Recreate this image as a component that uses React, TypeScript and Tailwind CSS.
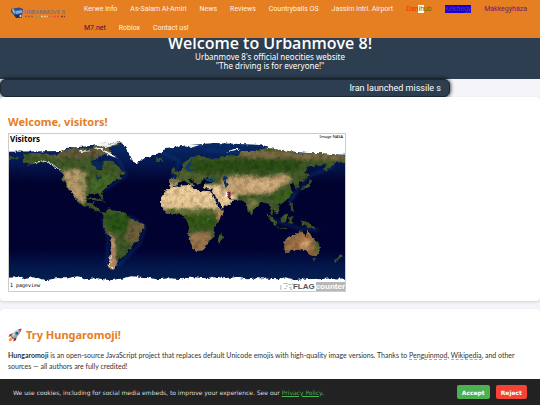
import { useState } from "react";
import type { ReactNode } from "react";

type NavItem = { label: ReactNode; key: string; className?: string };

const navItems: NavItem[] = [
  { key: "kerwe", label: "Kerwe Info" },
  { key: "salam", label: "As-Salam Al-Amiri" },
  { key: "news", label: "News" },
  { key: "reviews", label: "Reviews" },
  { key: "countryballs", label: "Countryballs OS" },
  { key: "jassim", label: "Jassim Intrl. Airport" },
  {
    key: "danihub",
    label: (
      <>
        <span className="text-[#ff2a00]">Dan</span>
        <span className="bg-white text-[#436f4d]">ih</span>
        <span className="text-[#4f7a00]">ub</span>
      </>
    ),
  },
  { key: "kekhegy", label: "Kékhegy", className: "bg-[#1400d8] text-[#5a35a8]" },
  { key: "makk", label: "Makkegyháza", className: "text-[#6b1f6f]" },
  { key: "m7", label: "M7.net", className: "text-[#4b0a4a]" },
  { key: "roblox", label: "Roblox" },
  { key: "contact", label: "Contact us!" },
];

function Logo() {
  return (
    <svg viewBox="0 0 58 14" className="h-[14px] w-[58px] shrink-0" role="img" aria-label="Urbanmove 8">
      <path d="M1 3 L9 1.5 L13 3 L12 10 L5 10 L1 6Z" fill="#284f8e" />
      <path d="M1.5 3.5 L4 3 L5.5 8 L3.5 7Z" fill="#9fb4cc" />
      <path d="M5 5 L12 4 L12 7 L6 8Z" fill="#7da9dc" />
      <path d="M4 9 L11 9 L12 11.5 L6 12Z" fill="#23304c" />
      <circle cx="10.5" cy="10" r="1" fill="#e8eef5" />
      <text x="14" y="8" fontSize="6" fontFamily="Roboto, sans-serif" fill="#5f6a9c">URBANMOVE 8</text>
      <path d="M15 10.5H24" stroke="#a0602f" strokeWidth="1.5" strokeDasharray="2 1" />
      <path d="M25 10.5H31" stroke="#8f9a63" strokeWidth="1.5" strokeDasharray="2 1" />
      <path d="M31 10.5H38" stroke="#f5c99a" strokeWidth="1.5" strokeDasharray="2 1" />
      <path d="M38 10.5H44" stroke="#b5793f" strokeWidth="1.5" strokeDasharray="2 1" />
      <path d="M44 10.5H50" stroke="#f0483a" strokeWidth="1.5" strokeDasharray="2 1" />
      <path d="M51 10.5H55" stroke="#7a3b2c" strokeWidth="1.5" strokeDasharray="2 1" />
    </svg>
  );
}

function WorldMap() {
  return (
    <svg viewBox="8 133 338 158" className="block w-full" role="img" aria-label="Visitors map">
      <defs>
        <filter id="rough" x="-5%" y="-5%" width="110%" height="110%" colorInterpolationFilters="sRGB">
          <feTurbulence type="fractalNoise" baseFrequency="0.25" numOctaves="3" seed="4" result="n" />
          <feDisplacementMap in="SourceGraphic" in2="n" scale="4" xChannelSelector="R" yChannelSelector="G" />
        </filter>
        <filter id="soft" x="-30%" y="-30%" width="160%" height="160%" colorInterpolationFilters="sRGB">
          <feGaussianBlur stdDeviation="1.5" />
        </filter>
        <filter id="grain" x="0" y="0" width="100%" height="100%" colorInterpolationFilters="sRGB">
          <feTurbulence type="fractalNoise" baseFrequency="0.2" numOctaves="3" seed="9" result="n" />
          <feColorMatrix in="n" values="0 0 0 0 0  0 0 0 0 0  0 0 0 0 0  2 0 0 0 -0.8" />
        </filter>
        <linearGradient id="sea" gradientUnits="userSpaceOnUse" x1="0" y1="140" x2="0" y2="280">
          <stop offset="0" stopColor="#0a2c66" />
          <stop offset="0.15" stopColor="#051852" />
          <stop offset="0.3" stopColor="#02022f" />
          <stop offset="0.78" stopColor="#020232" />
          <stop offset="0.9" stopColor="#03164a" />
          <stop offset="1" stopColor="#052050" />
        </linearGradient>
        <clipPath id="land">
          <path d="M5 155L19 157L5 160Z M22 158L23 155L30 152L45 153L57 154L62 149L75 147L90 148L100 143L122 142L108 147L113 155L105 153L98 156L91 161L93 165L98 167L100 170L103 164L103 160L110 160L116 163L120 168L126 173L119 175L122 178L114 180L109 183L104 188L102 192L103 199L101 199L98 193L92 193L86 196L86 202L91 203L94 200L93 205L98 208L101 212L105 212L103 214L97 211L90 207L83 206L77 201L74 195L71 191L67 188L64 183L62 178L62 173L57 167L50 163L41 162L33 163L25 166L29 163L22 161Z" />
          <path d="M103 214L108 208L112 210L118 210L124 212L128 217L135 220L144 224L144 227L140 232L138 240L133 244L130 249L126 253L124 256L119 258L117 263L113 268L114 270L110 269L108 265L109 256L111 245L110 236L105 231L102 225L103 219Z" />
          <path d="M161 197L165 191L170 187L180 185L191 184L192 188L197 189L201 191L204 189L211 190L214 196L219 206L221 209L225 209L222 216L217 223L214 227L215 236L209 241L207 246L203 250L195 251L191 243L188 234L189 226L187 220L182 214L173 214L166 213L161 206Z" />
          <path d="M218 240L219 235L223 232L223 236L221 243L218 243Z" />
          <path d="M169 184L169 178L177 178L177 175L173 172L182 169L182 164L185 161L192 157L200 154L207 157L214 158L220 157L226 155L238 154L243 150L252 150L268 147L282 149L300 152L322 152L350 155L350 160L337 162L333 165L327 171L324 168L328 163L318 165L309 166L305 171L311 174L306 179L300 182L299 187L296 188L294 182L290 184L293 190L290 197L284 202L278 204L281 209L278 213L273 210L275 216L272 213L270 205L266 201L261 203L255 208L252 214L248 211L247 204L242 200L234 199L227 195L230 199L234 199L231 203L222 208L217 202L212 193L213 188L203 187L206 183L214 182L211 178L207 176L202 180L198 185L196 182L190 178L187 178L195 184L192 185L186 180L182 180L175 185L171 186Z M171 169L174 166L176 172L172 173Z M301 189L305 185L309 183L311 178L313 180L309 187L303 188Z" />
          <path d="M267 213L270 214L278 223L276 225L271 220Z M277 226L289 228L287 229L277 227Z M281 218L286 213L289 214L286 222L282 222Z M290 217L294 217L292 220L294 223L290 223Z M290 200L293 205L295 212L292 209Z M301 220L309 222L317 228L309 227L303 224Z M83 198L96 197L105 201L96 200Z M155 157L162 157L162 160L157 160Z" />
          <path d="M284 241L290 237L297 232L303 231L306 236L309 230L313 237L320 244L321 250L317 256L311 255L307 250L302 249L295 250L286 252Z M312 258L316 258L315 261Z M341 253L344 256L340 258L336 263L334 261L339 258Z" />
        </clipPath>
      </defs>

      <rect x="8" y="133" width="338" height="159" fill="#fff" />
      <path d="M0 151L60 150L66 147L90 145L122 141L130 148L145 157L162 151L166 147L190 144L215 142L260 144L275 149L320 153L356 154V280H0Z" fill="url(#sea)" filter="url(#rough)" />

      {/* shallow water */}
      <g fill="none" stroke="#0f4a8c" strokeWidth="2" opacity="0.5" filter="url(#soft)">
        <path d="M103 190L126 175L118 158" />
        <path d="M128 215L145 226L139 244L117 266" />
        <path d="M162 152L180 160L172 178L190 165" />
        <path d="M205 149L245 152L270 152" />
        <path d="M295 190L290 202L310 175L335 166" />
        <path d="M272 219L300 228L320 230" />
        <path d="M102 218L108 238L106 265" />
      </g>

      <g filter="url(#rough)">
        <g clipPath="url(#land)">
          <rect x="0" y="133" width="356" height="150" fill="#425a28" />
          <g filter="url(#soft)">
            <path d="M20 150L120 140L130 155L60 158Z" fill="#655d3a" />
            <path d="M61 170L78 168L86 180L84 203L70 198Z" fill="#b99b6c" />
            <path d="M78 168L86 172L84 190L78 188Z" fill="#9c925e" />
            <path d="M90 178L115 172L105 192L92 192Z" fill="#456b26" />
            <path d="M104 212L130 216L128 232L108 230Z" fill="#2a5516" />
            <path d="M130 218L148 222L138 246L124 238Z" fill="#6e613a" />
            <path d="M108 231L114 236L117 266L108 271Z" fill="#be916c" />
            <path d="M158 184L236 184L236 208L218 208L158 208Z" fill="#efcf9b" />
            <path d="M182 212L215 212L214 226L188 228Z" fill="#355a16" />
            <path d="M160 209L220 209L216 214L160 215Z" fill="#667133" />
            <path d="M188 233L212 231L207 252L192 252Z" fill="#9c7850" />
            <path d="M216 210L228 207L218 222Z" fill="#bd9365" />
            <path d="M168 179L180 179L180 184L168 184Z" fill="#98855a" />
            <path d="M180 170L205 170L205 182L180 180Z" fill="#52652e" />
            <path d="M190 160L300 158L300 169L190 172Z" fill="#2d4f15" />
            <path d="M240 148L346 153L346 160L240 157Z" fill="#7a6c45" />
            <path d="M222 176L250 175L262 177L288 173L292 180L270 193L232 194L220 188Z" fill="#c6a474" />
            <path d="M246 182L278 182L266 190L250 188Z" fill="#e0bb8a" />
            <path d="M246 198L260 200L252 213Z" fill="#808046" />
            <path d="M277 190L294 188L290 203L276 203Z" fill="#3e6021" />
            <path d="M283 230L313 230L322 256L283 254Z" fill="#a27348" />
            <path d="M302 240L310 240L310 249L301 248Z" fill="#dca675" />
            <path d="M313 238L323 246L318 258Z" fill="#657038" />
          </g>
          <rect x="8" y="133" width="338" height="150" fill="#000" filter="url(#grain)" opacity="0.3" />
        </g>

        {/* inland seas */}
        <path d="M204 178L213 177L215 180L206 181Z" fill="#0c4375" />
        <path d="M223 176L227 175L226 179L229 184L226 186L224 182Z" fill="#06306a" />
        <path d="M92 160L100 160L103 166L98 170L93 165Z" fill="#082658" />
        <path d="M186 167L190 161L193 158L191 165L188 169L195 169L189 171Z" fill="#0d3a6d" />
        <path d="M94 174L99 175L102 179L98 178Z" fill="#0d2f5f" />
        <path d="M212 191L219 204L221 208" fill="none" stroke="#03103c" strokeWidth="2" />
        <path d="M207 218L210 218L209 222Z" fill="#287779" />

        {/* ice */}
        <path d="M120 140L130 139L168 138L166 143L159 147L158 152L149 155L141 159L137 163L133 161L129 153L126 148Z" fill="#fff" />
        <path d="M80 149L92 150L80 151Z M95 143L121 142L105 146Z M94 147L101 147L111 153L118 158L110 155L103 150Z M186 144L200 144L190 147Z M226 152L234 148L242 148L232 150Z" fill="#eef2f2" />
        <path d="M33 162L42 160L51 163L60 170" fill="none" stroke="#d8dfd9" strokeWidth="1" />
        <path d="M111 255L109 265L113 269" fill="none" stroke="#f4eee8" strokeWidth="1" />
      </g>

      <path d="M0 278L18 277L23 279L32 277L46 280L55 278L67 278L77 276L84 279L96 278L110 280L124 278L130 276L148 277L156 279L170 278L182 279L194 277L207 278L214 276L224 278L236 277L248 279L260 278L278 279L286 277L296 280L308 278L320 279L332 278L356 279V296H0Z" fill="#fff" filter="url(#rough)" />

      {/* visitor flag */}
      <rect x="226" y="191" width="2" height="5" fill="#fff" />
      <path d="M228 191H231V196H227L229 195L227 194L229 193L227 192Z" fill="#7d2538" />

      <g fill="#b5b5b5">
        <path d="M281 285h1v5h-1zM284 283h4v1h-4zM287 285h1v2h-1zM285 288h2v1h-2zM289 284h3v1h-3zM290 287h2v3h-1v-2h-1z" />
        <path d="M293 283h1v2h-1zM292 289h1v1h-1z" />
      </g>
    </svg>
  );
}

function Rocket() {
  return (
    <svg viewBox="0 0 16 16" className="h-[14px] w-[14px]" aria-hidden="true">
      <path d="M6 6L2 7L0.5 10L5 9Z" fill="#b5332e" />
      <path d="M10 10L9 14L6 15.5L7 11Z" fill="#8f2a2b" />
      <path d="M5 10L1.5 12L1 15L4 14.5L6 11.5Z" fill="#f28b30" />
      <path d="M5 10.5L2.5 13L4.5 13Z" fill="#ffd45a" />
      <path d="M4 9C6 5 9 2 13 2L14 3C14 7 11 10 7 12Z" fill="#8fa6b3" />
      <path d="M4 9C6 5 9 2 13 2L5.5 10.5Z" fill="#c3d2da" />
      <path d="M11.5 1.5L15.5 0.5L14.5 4.5Z" fill="#d83a34" />
      <circle cx="10" cy="6" r="1.6" fill="#27566f" />
      <path d="M4 9L7 12L6 12.5L3.5 10Z" fill="#45606e" />
    </svg>
  );
}

function CookieBar({ onClose }: { onClose: () => void }) {
  return (
    <div className="fixed inset-x-0 bottom-0 z-20 flex h-[26px] items-center justify-between bg-[#222222] px-[13px] font-['DejaVu_Sans',sans-serif] text-[6px] text-[#dddddd]">
      <p>
        We use cookies, including for social media embeds, to improve your experience. See our{" "}
        <a href="#privacy" className="text-[#4caf50] underline">Privacy Policy</a>.
      </p>
      <div className="flex gap-[6px]">
        <button onClick={onClose} className="h-[14px] rounded-[2px] bg-[#4caf50] px-[5px] font-bold text-white">Accept</button>
        <button onClick={onClose} className="h-[14px] rounded-[2px] bg-[#f44336] px-[5px] font-bold text-white">Reject</button>
      </div>
    </div>
  );
}

export default function App() {
  const [cookieOpen, setCookieOpen] = useState(true);

  return (
    <div className="min-h-screen overflow-hidden bg-[#f4f4f9] font-['Noto_Sans',sans-serif] text-[#333333]">
      <nav className="fixed inset-x-0 top-0 z-10 flex h-[38px] items-start bg-[#e67e22] pl-[10px] pr-2">
        <a href="#home" className="mr-4 mt-[6px]"><Logo /></a>
        <ul className="flex flex-1 flex-wrap gap-x-[13px] font-[Roboto,sans-serif] text-[7px] leading-[19px] text-[#fdf1e4]">
          {navItems.map((item) => (
            <li key={item.key}>
              <a href={"#" + item.key} className={item.className}>{item.label}</a>
            </li>
          ))}
        </ul>
      </nav>

      <header className="h-[79px] bg-[#2c3e50] pt-[34px] text-center text-white">
        <h1 className="font-['Open_Sans',sans-serif] text-[16px] font-semibold leading-[18px]">Welcome to Urbanmove 8!</h1>
        <p className="text-[8px] leading-[9px]">Urbanmove 8's official neocities website</p>
        <p className="text-[8px] leading-[9px]">"The driving is for everyone!"</p>
      </header>

      <div className="w-5/6 rounded-[6px] border border-[#1a2836] bg-[#2c3e50] px-2 text-right font-[Roboto,sans-serif] text-[9px] leading-[16px] text-white shadow-[0_0_4px_#000000]">
        Iran launched missile s
      </div>

      <main className="flex flex-col gap-2">
        <section className="rounded-[4px] bg-white px-2 pb-[9px] pt-[17px] shadow-[0_1px_3px_rgba(0,0,0,0.15)]">
          <h2 className="text-[11px] font-bold leading-[16px] text-[#e67e22]">Welcome, visitors!</h2>
          <div className="relative mt-[3px] w-[338px] max-w-full border border-[#cccccc]">
            <WorldMap />
            <span className="absolute left-px top-0 text-[8px] font-bold leading-[9px] text-black">Visitors</span>
            <span className="absolute right-[2px] top-0 text-[4px] leading-[6px] text-black">Image NASA</span>
            <span className="absolute bottom-[3px] left-px font-['DejaVu_Sans_Mono',monospace] text-[5px] leading-[6px] text-black">1 pageview</span>
            <span className="absolute bottom-0 right-0 flex font-['Liberation_Sans',sans-serif] text-[8px] font-bold leading-[9px]">
              <span className="mr-px text-[#555555]">FLAG</span>
              <span className="bg-[#b8b8b8] text-white">counter</span>
            </span>
          </div>
        </section>

        <section className="rounded-[4px] bg-white px-2 pb-10 pt-[17px] shadow-[0_1px_3px_rgba(0,0,0,0.15)]">
          <h2 className="flex items-center gap-1 text-[11px] font-bold leading-[18px] text-[#e67e22]">
            <Rocket /> Try Hungaromoji!
          </h2>
          <p className="mt-[6px] font-[Lato,sans-serif] text-[7px] leading-[11px]">
            <b>Hungaromoji</b> is an open-source JavaScript project that replaces default Unicode emojis with high-quality image versions. Thanks to{" "}
            <a href="#penguinmod" className="border-b border-dashed border-[#aaaaaa]">Penguinmod</a>,{" "}
            <a href="#wikipedia" className="border-b border-dashed border-[#aaaaaa]">Wikipedia</a>, and other sources — all authors are fully credited!
          </p>
        </section>
      </main>

      {cookieOpen && <CookieBar onClose={() => setCookieOpen(false)} />}
    </div>
  );
}
